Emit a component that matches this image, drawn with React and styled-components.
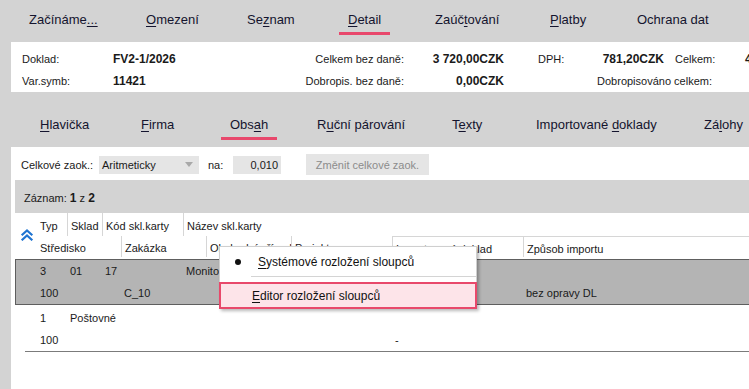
import React from 'react';
import styled, { createGlobalStyle } from 'styled-components';

const Global = createGlobalStyle`
  html, body { margin: 0; padding: 0; background: #d3d3d3; overflow: hidden; }
  body { font-family: "Liberation Sans", Arial, sans-serif; color: #16162c; }
  #root { width: 749px; height: 389px; }
`;

const Page = styled.div`
  width: 749px;
  height: 389px;
  overflow: hidden;
  display: flex;
  flex-direction: column;
`;

const TabStrip = styled.div`
  display: flex;
  flex-shrink: 0;
  box-sizing: border-box;
  height: ${p => p.$h}px;
  padding-top: ${p => p.$pt}px;
  padding-left: ${p => p.$pl}px;
  white-space: nowrap;
`;

const TabCell = styled.div`
  flex: 0 0 ${p => p.$w}px;
  font-size: 13px;
  line-height: 16px;
`;

const TabLabel = styled.span`
  position: relative;
  display: inline-block;
  color: #14142e;
  &::after {
    content: '';
    display: ${p => (p.$active ? 'block' : 'none')};
    position: absolute;
    left: -9px;
    right: -9px;
    top: 20px;
    height: 3px;
    background: #e8486c;
  }
`;

const Key = styled.u`
  text-decoration: underline;
  text-underline-offset: 2px;
  text-decoration-thickness: 1px;
`;

const InfoPanel = styled.div`
  margin-left: 11px;
  height: 50px;
  flex-shrink: 0;
  background: #fff;
  box-sizing: border-box;
  padding: 6px 0 0 11px;
  display: grid;
  grid-template-columns: 91px 199px 92px 100px 34px 126px 11px 70px 60px;
  grid-auto-rows: 22px;
  font-size: 11px;
  white-space: nowrap;
  overflow: hidden;
`;

const InfoCell = styled.div`
  display: flex;
  align-items: center;
  justify-content: ${p => (p.$right ? 'flex-end' : p.$between ? 'space-between' : 'flex-start')};
  font-weight: ${p => (p.$bold ? 700 : 400)};
  font-size: ${p => (p.$bold ? '12px' : '11px')};
  grid-column: ${p => p.$col || 'auto'};
  padding-right: ${p => p.$pr || 0}px;
  color: #1a1a1a;
`;

const Panel = styled.div`
  position: relative;
  flex: 1;
  margin-left: 11px;
  background: #fff;
  display: flex;
  flex-direction: column;
`;

const Toolbar = styled.div`
  height: 33px;
  box-sizing: border-box;
  padding: 2px 0 0 10px;
  display: flex;
  align-items: center;
  font-size: 11px;
  color: #1a1a1a;
  white-space: nowrap;
`;

const FieldLabel = styled.span`
  width: ${p => p.$w}px;
  flex-shrink: 0;
`;

const Select = styled.div`
  width: 100px;
  height: 18px;
  background: #e5e5e5;
  box-sizing: border-box;
  padding: 0 3px;
  display: flex;
  align-items: center;
  justify-content: space-between;
  margin-right: 9px;
`;

const Arrow = styled.span`
  width: 0;
  height: 0;
  border-left: 4px solid transparent;
  border-right: 4px solid transparent;
  border-top: 5px solid #a9a9a9;
  margin-right: 3px;
`;

const NumInput = styled.div`
  width: 48px;
  height: 18px;
  background: #e5e5e5;
  box-sizing: border-box;
  padding-right: 3px;
  display: flex;
  align-items: center;
  justify-content: flex-end;
  margin-right: 25px;
`;

const Button = styled.div`
  width: 123px;
  height: 21px;
  background: #e5e5e5;
  color: #8c8c8c;
  display: flex;
  align-items: center;
  justify-content: center;
`;

const RecordBar = styled.div`
  margin-left: 4px;
  height: 33px;
  flex-shrink: 0;
  background: #d3d3d3;
  box-sizing: border-box;
  padding: 2px 0 0 9px;
  display: flex;
  align-items: center;
  font-size: 11px;
  color: #1a1a1a;
  white-space: pre;
  b { font-size: 12px; }
`;

const Table = styled.div`
  margin-left: 4px;
  display: flex;
  flex-direction: column;
`;

const Header = styled.div`
  display: grid;
  grid-template-columns: 21px 1fr;
  height: 44px;
`;

const Chevron = styled.div`
  display: flex;
  align-items: center;
  justify-content: center;
  padding: 0 0 0 2px;
  color: #1f74d1;
`;

const HeaderRows = styled.div`
  display: flex;
  flex-direction: column;
`;

const Row = styled.div`
  display: grid;
  grid-template-columns: ${p => p.$cols};
  height: ${p => p.$h}px;
  font-size: 11px;
  white-space: nowrap;
`;

const HCell = styled.div`
  display: flex;
  align-items: center;
  box-sizing: border-box;
  padding: 3px 0 0 ${p => (p.$first ? 4 : 3)}px;
  border-left: ${p => (p.$first ? 'none' : '1px solid #d6d6d6')};
  border-top: ${p => (p.$topLine ? '1px solid #d6d6d6' : 'none')};
  color: #1a1a1a;
  overflow: hidden;
`;

const Record = styled.div`
  margin-top: ${p => p.$mt}px;
  background: ${p => (p.$selected ? '#b4b4b4' : '#fff')};
  border: ${p => (p.$selected ? '1px solid #5e5e5e' : 'none')};
  border-right: none;
  padding-left: ${p => (p.$selected ? 20 : 21)}px;
`;

const DCell = styled.div`
  display: flex;
  align-items: center;
  padding-left: ${p => (p.$first ? 4 : 3)}px;
  color: #1a1a1a;
  overflow: visible;
`;

const ListEnd = styled.div`
  margin-left: 10px;
  border-top: 1px solid #7b7b7b;
`;

const Menu = styled.div`
  position: absolute;
  left: 208px;
  top: 99px;
  width: 258px;
  background: #fff;
  border: 1px solid #cfcfcf;
  box-shadow: 2px 2px 3px rgba(0, 0, 0, 0.28);
  box-sizing: border-box;
  font-size: 12px;
  color: #111;
`;

const MenuItem = styled.div`
  height: ${p => p.$h}px;
  box-sizing: border-box;
  display: flex;
  align-items: center;
  padding-left: ${p => (p.$hl ? 31 : 12)}px;
  margin: ${p => (p.$hl ? '0 -1px -1px -1px' : '0')};
  background: ${p => (p.$hl ? '#fde4e9' : 'transparent')};
  border: ${p => (p.$hl ? '2px solid #e8496b' : 'none')};
  white-space: nowrap;
`;

const Bullet = styled.span`
  width: 6px;
  height: 6px;
  border-radius: 50%;
  background: #111;
  margin-right: 17px;
  margin-left: 3px;
`;

const MenuSep = styled.div`
  height: 1px;
  background: #d4d4d4;
  margin: 0 0 5px 31px;
`;

const topTabs = [
  { w: 117, label: <>Začínáme<Key>...</Key></> },
  { w: 101, label: <><Key>O</Key>mezení</> },
  { w: 101, label: <>Se<Key>z</Key>nam</> },
  { w: 87, label: <><Key>D</Key>etail</>, active: true },
  { w: 115, label: <>Zaúč<Key>t</Key>ování</> },
  { w: 87, label: <><Key>P</Key>latby</> },
  { w: 112, label: <>Ochrana dat</> },
];

const subTabs = [
  { w: 101, label: <><Key>H</Key>lavička</> },
  { w: 89, label: <><Key>F</Key>irma</> },
  { w: 87, label: <>Obs<Key>a</Key>h</>, active: true },
  { w: 135, label: <>R<Key>u</Key>ční párování</> },
  { w: 84, label: <>T<Key>e</Key>xty</> },
  { w: 168, label: <>Importované <Key>d</Key>oklady</> },
  { w: 60, label: <>Zá<Key>l</Key>ohy</> },
];

const cols1 = '31px 35px 81px 1fr';
const cols2 = '85px 85px 85px 101px 131px 1fr';

const head1 = ['Typ', 'Sklad', 'Kód skl.karty', 'Název skl.karty'];
const head2 = ['Středisko', 'Zakázka', 'Obchodní případ', 'Projekt', 'Importovaný doklad', 'Způsob importu'];

const records = [
  { r1: ['3', '01', '17', 'Monitor'], r2: ['100', 'C_10', '', '', '', 'bez opravy DL'], selected: true },
  { r1: ['1', 'Poštovné', '', ''], r2: ['100', '', '', '', '-', ''] },
];

function Tabs({ items, h, pt, pl }) {
  return (
    <TabStrip $h={h} $pt={pt} $pl={pl}>
      {items.map((t, i) => (
        <TabCell key={i} $w={t.w}>
          <TabLabel $active={t.active}>{t.label}</TabLabel>
        </TabCell>
      ))}
    </TabStrip>
  );
}

export default function App() {
  return (
    <Page>
      <Global />
      <Tabs items={topTabs} h={42} pt={12} pl={29} />
      <InfoPanel>
        <InfoCell>Doklad:</InfoCell>
        <InfoCell $bold>FV2-1/2026</InfoCell>
        <InfoCell $right>Celkem bez daně:</InfoCell>
        <InfoCell $right $bold>3 720,00CZK</InfoCell>
        <InfoCell />
        <InfoCell $between>
          <span>DPH:</span>
          <b style={{ fontSize: 12 }}>781,20CZK</b>
        </InfoCell>
        <InfoCell />
        <InfoCell>Celkem:</InfoCell>
        <InfoCell $bold>4 501,20CZK</InfoCell>

        <InfoCell>Var.symb:</InfoCell>
        <InfoCell $bold>11421</InfoCell>
        <InfoCell $right>Dobropis. bez daně:</InfoCell>
        <InfoCell $right $bold>0,00CZK</InfoCell>
        <InfoCell />
        <InfoCell $right $col="6 / 9" $pr={33}>Dobropisováno celkem:</InfoCell>
      </InfoPanel>
      <Tabs items={subTabs} h={55} pt={25} pl={40} />
      <Panel>
        <Toolbar>
          <FieldLabel $w={78}>Celkové zaok.:</FieldLabel>
          <Select>
            <span>Aritmeticky</span>
            <Arrow />
          </Select>
          <FieldLabel $w={25}>na:</FieldLabel>
          <NumInput>0,010</NumInput>
          <Button>Změnit celkové zaok.</Button>
        </Toolbar>
        <RecordBar>
          Záznam: <b>1</b> z <b>2</b>
        </RecordBar>
        <Table>
          <Header>
            <Chevron>
              <svg width="14" height="12" viewBox="0 0 14 12" fill="none" stroke="currentColor" strokeWidth="2.2" strokeLinecap="square">
                <polyline points="2.5,5.5 7,1.5 11.5,5.5" />
                <polyline points="2.5,10.5 7,6.5 11.5,10.5" />
              </svg>
            </Chevron>
            <HeaderRows>
              <Row $cols={cols1} $h={23}>
                {head1.map((h, i) => (
                  <HCell key={h} $first={i === 0}>{h}</HCell>
                ))}
              </Row>
              <Row $cols={cols2} $h={21}>
                {head2.map((h, i) => (
                  <HCell key={h} $first={i === 0} $topLine={i >= 4}>{h}</HCell>
                ))}
              </Row>
            </HeaderRows>
          </Header>
          {records.map((r, k) => (
            <Record key={k} $selected={r.selected} $mt={2}>
              <Row $cols={cols1} $h={22}>
                {r.r1.map((c, i) => (
                  <DCell key={i} $first={i === 0}>{c}</DCell>
                ))}
              </Row>
              <Row $cols={cols2} $h={22}>
                {r.r2.map((c, i) => (
                  <DCell key={i} $first={i === 0}>{c}</DCell>
                ))}
              </Row>
            </Record>
          ))}
          <ListEnd />
        </Table>
        <Menu>
          <MenuItem $h={29}>
            <Bullet />
            <span><Key>S</Key>ystémové rozložení sloupců</span>
          </MenuItem>
          <MenuSep />
          <MenuItem $h={27} $hl>
            <span><Key>E</Key>ditor rozložení sloupců</span>
          </MenuItem>
        </Menu>
      </Panel>
    </Page>
  );
}
